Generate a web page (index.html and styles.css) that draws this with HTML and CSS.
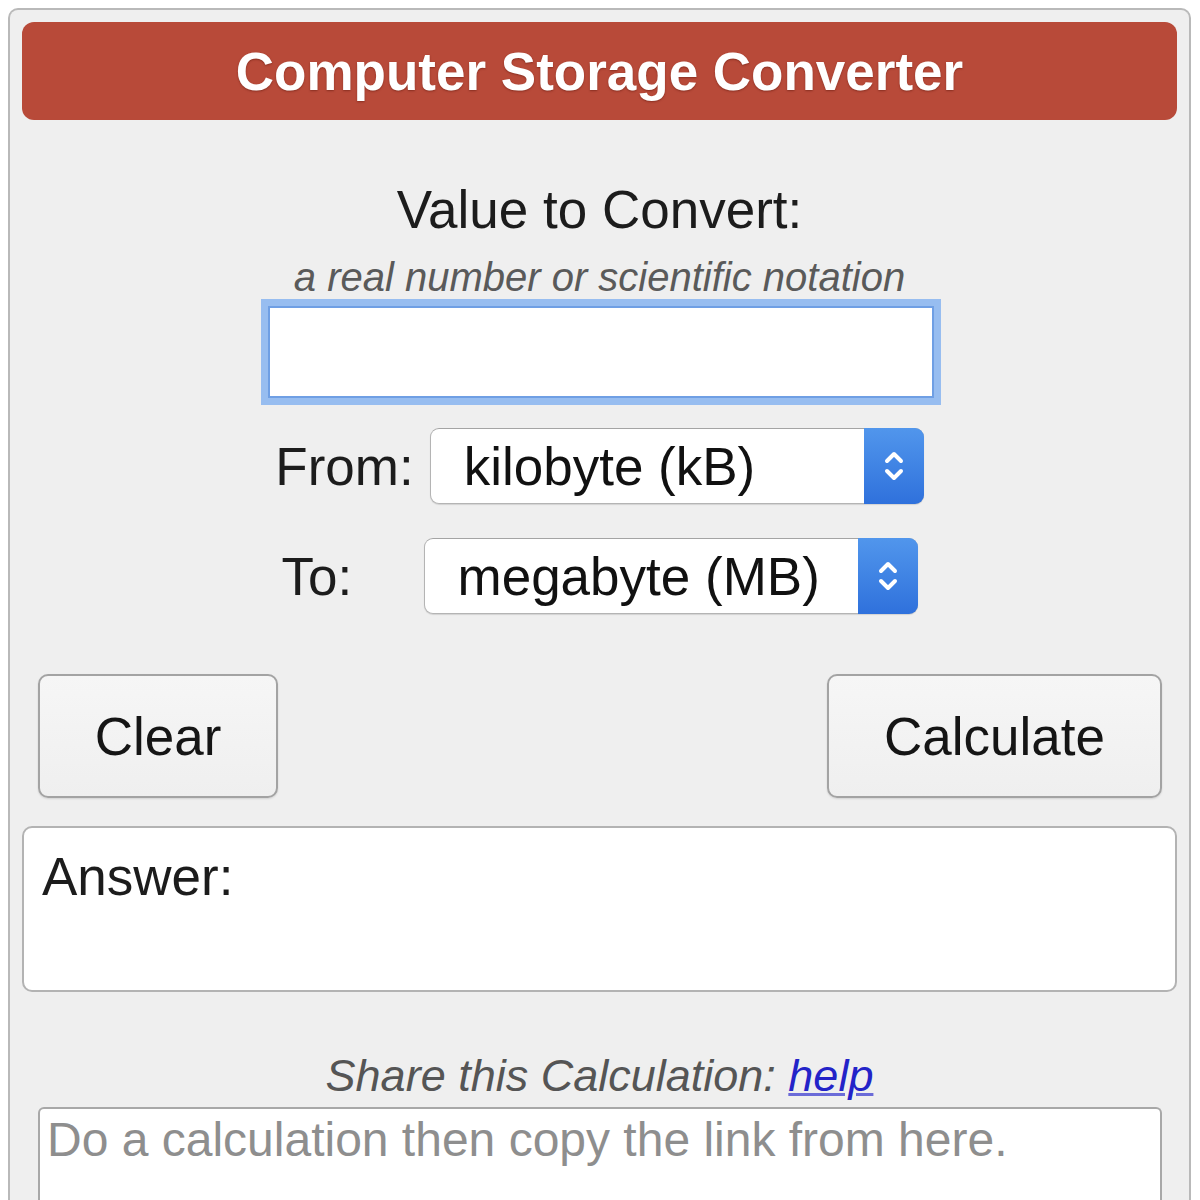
FILE: index.html
```html
<!DOCTYPE html>
<html lang="en">
<head>
<meta charset="utf-8">
<title>Computer Storage Converter</title>
<link rel="stylesheet" href="styles.css">
</head>
<body>
<div class="card">
  <div class="header"><h1>Computer Storage Converter</h1></div>
  <div class="main-label">Value to Convert:</div>
  <div class="hint">a real number or scientific notation</div>
  <div class="input-wrap"><input type="text" class="value-input"></div>
  <div class="rows">
    <div class="row">
      <label class="row-label">From:</label>
      <div class="select-wrap">
        <select class="unit-select"><option>kilobyte (kB)</option></select>
        <span class="select-arrow"><svg width="24" height="42" viewBox="0 0 24 42"><path d="M5 16 L12 9 L19 16" fill="none" stroke="#fff" stroke-width="4" stroke-linecap="round" stroke-linejoin="round"/><path d="M5 26 L12 33 L19 26" fill="none" stroke="#fff" stroke-width="4" stroke-linecap="round" stroke-linejoin="round"/></svg></span>
      </div>
    </div>
    <div class="row">
      <label class="row-label">To:</label>
      <div class="select-wrap">
        <select class="unit-select"><option>megabyte (MB)</option></select>
        <span class="select-arrow"><svg width="24" height="42" viewBox="0 0 24 42"><path d="M5 16 L12 9 L19 16" fill="none" stroke="#fff" stroke-width="4" stroke-linecap="round" stroke-linejoin="round"/><path d="M5 26 L12 33 L19 26" fill="none" stroke="#fff" stroke-width="4" stroke-linecap="round" stroke-linejoin="round"/></svg></span>
      </div>
    </div>
  </div>
  <div class="buttons">
    <button class="btn btn-clear">Clear</button>
    <button class="btn btn-calc">Calculate</button>
  </div>
  <div class="answer">Answer:</div>
  <div class="share">Share this Calculation: <a href="#" class="help">help</a></div>
  <textarea class="share-box" placeholder="Do a calculation then copy the link from here."></textarea>
</div>
</body>
</html>
```
FILE: styles.css
```css
* { box-sizing: border-box; }
html, body { margin: 0; padding: 0; background: #ffffff; }
body { font-family: "Liberation Sans", Arial, Helvetica, sans-serif; color: #1a1a1a; }

.card {
  margin: 8px 0 0 8px;
  width: 1183px;
  height: 1192px;
  border: 2px solid #b9b9b9;
  border-bottom: none;
  border-radius: 10px 10px 0 0;
  background: #efefef;
  padding-top: 12px;
}

.header {
  margin: 0 12px;
  height: 98px;
  background: #b84a39;
  border-radius: 12px;
  display: flex;
  align-items: center;
  justify-content: center;
}
.header h1 {
  margin: 0;
  font-size: 53px;
  line-height: 61px;
  font-weight: bold;
  color: #ffffff;
  text-shadow: 0 1px 2px rgba(90, 20, 10, 0.5);
}

.main-label {
  margin-top: 59px;
  text-align: center;
  font-size: 53px;
  line-height: 61px;
  color: #1c1c1c;
}
.hint {
  margin-top: 14px;
  text-align: center;
  font-size: 40px;
  line-height: 46px;
  font-style: italic;
  color: #5a5a5a;
}

.input-wrap {
  margin-top: 6px;
  display: flex;
  justify-content: center;
}
.value-input {
  width: 666px;
  height: 92px;
  margin-left: 2px;
  border: 2px solid #6f9fe4;
  background: #ffffff;
  box-shadow: 0 0 0 7px #97bdf0;
  outline: none;
  font-size: 53px;
  font-family: inherit;
  padding: 0 10px;
}

.rows {
  margin-top: 30px;
  display: flex;
  flex-direction: column;
  align-items: center;
  gap: 34px;
}
.row {
  display: flex;
  align-items: center;
  gap: 16px;
}
.row-label {
  min-width: 126px;
  font-size: 53px;
  line-height: 61px;
  color: #1c1c1c;
}
.select-wrap {
  position: relative;
  width: 494px;
  height: 76px;
}
.unit-select {
  -webkit-appearance: none;
  appearance: none;
  width: 100%;
  height: 100%;
  border: 1.5px solid #b4b4b4;
  border-top-color: #a4a4a4;
  border-radius: 9px;
  background: #ffffff;
  font-family: inherit;
  font-size: 53px;
  color: #111111;
  padding: 0 70px 0 33px;
  box-shadow: 0 1px 1px rgba(0,0,0,0.12);
}
.select-arrow {
  position: absolute;
  top: 0;
  right: 0;
  width: 60px;
  height: 76px;
  border-radius: 0 9px 9px 0;
  background: linear-gradient(#5196ec, #2f71dc);
  display: flex;
  align-items: center;
  justify-content: center;
  pointer-events: none;
}

.buttons {
  margin-top: 60px;
  padding: 0 27px 0 28px;
  display: flex;
  justify-content: space-between;
}
.btn {
  height: 124px;
  border: 2px solid #a3a3a3;
  border-radius: 10px;
  background: linear-gradient(#f6f6f6, #efefef);
  box-shadow: 0 1px 2px rgba(0,0,0,0.12);
  font-family: inherit;
  font-size: 53px;
  color: #151515;
  padding: 0;
}
.btn-clear { width: 240px; }
.btn-calc { width: 335px; }

.answer {
  margin: 28px 12px 0;
  height: 166px;
  background: #ffffff;
  border: 2px solid #b3b3b3;
  border-radius: 10px;
  padding: 18px 18px 0;
  font-size: 53px;
  line-height: 61px;
  color: #1c1c1c;
}

.share {
  margin-top: 58px;
  text-align: center;
  font-size: 45px;
  line-height: 52px;
  font-style: italic;
  color: #555555;
}
.help {
  color: #2323c8;
  text-decoration: underline;
  text-decoration-color: #6b6bd8;
  text-decoration-thickness: 3px;
}

.share-box {
  display: block;
  margin: 5px 27px 0 28px;
  width: calc(100% - 55px);
  height: 93px;
  border: 2px solid #a8a8a8;
  border-bottom: none;
  border-radius: 6px 6px 0 0;
  background: #ffffff;
  font-family: inherit;
  font-size: 48px;
  line-height: 54px;
  padding: 4px 7px;
  resize: none;
  overflow: hidden;
  color: #222;
}
.share-box::placeholder { color: #8e8e8e; }
```
